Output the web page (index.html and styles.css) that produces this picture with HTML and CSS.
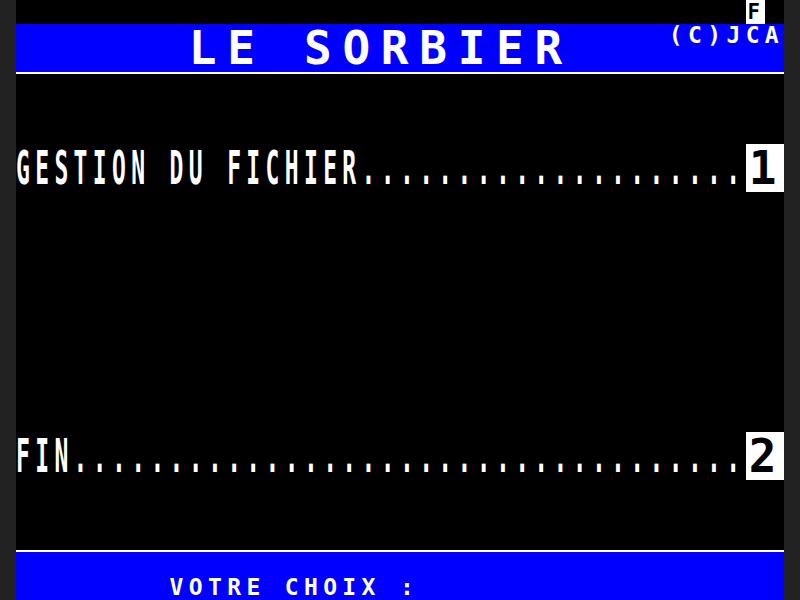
FILE: index.html
```html
<!DOCTYPE html>
<html lang="fr">
<head>
<meta charset="utf-8">
<title>Le Sorbier</title>
<link rel="stylesheet" href="styles.css">
</head>
<body>
<main class="screen">
  <div class="status"><span class="inv">F</span></div>
  <header class="band top">
    <h1 class="title">LE SORBIER</h1>
    <span class="copy">(C)JCA</span>
  </header>
  <div class="item first">
    <span class="tall">GESTION DU FICHIER....................</span>
    <span class="key">1</span>
  </div>
  <div class="item second">
    <span class="tall">FIN...................................</span>
    <span class="key">2</span>
  </div>
  <footer class="band bottom">
    <span class="prompt">VOTRE CHOIX :</span>
  </footer>
</main>
</body>
</html>
```
FILE: styles.css
```css
:root {
  --cell: 19.2px;
}
* {
  box-sizing: border-box;
  margin: 0;
  padding: 0;
}
html, body {
  height: 100%;
}
body {
  background: #222;
  overflow: hidden;
}
.screen {
  width: 768px;
  height: 600px;
  margin: 0 auto;
  background: #000;
  color: #fff;
  font-family: "DejaVu Sans Mono", monospace;
  font-weight: bold;
  font-size: 23px;
  letter-spacing: 5.35px;
  white-space: pre;
  display: flex;
  flex-direction: column;
}
.status {
  height: 24px;
  display: flex;
  padding-left: calc(var(--cell) * 38);
}
.inv {
  display: block;
  width: var(--cell);
  height: 24px;
  font-size: 20.6px;
  line-height: 24px;
  letter-spacing: 0;
  padding-left: 2px;
  background: #fff;
  color: #000;
}
.band {
  height: 48px;
  background: #0000ff;
  display: flex;
  align-items: flex-start;
}
.top {
  box-shadow: 0 2px 0 #fff;
}
.title {
  margin-left: calc(var(--cell) * 9);
  font-size: 46px;
  font-weight: bold;
  letter-spacing: 10.71px;
  line-height: 48px;
  height: 48px;
}
.copy {
  margin-left: calc(var(--cell) * 5);
  line-height: 22px;
}
.item {
  height: 48px;
  display: flex;
}
.first {
  margin-top: 72px;
}
.second {
  margin-top: 240px;
}
.tall {
  display: block;
  height: 24px;
  line-height: 25px;
  transform: scaleY(2);
  transform-origin: top left;
}
.key {
  display: block;
  width: calc(var(--cell) * 2);
  height: 48px;
  padding-right: 4px;
  background: #fff;
  color: #000;
  font-size: 46px;
  line-height: 48px;
  letter-spacing: 0;
  text-align: center;
}
.bottom {
  margin-top: 72px;
  padding-top: 24px;
  box-shadow: 0 -2px 0 #fff;
}
.prompt {
  margin-left: calc(var(--cell) * 8);
  line-height: 22px;
}
```
